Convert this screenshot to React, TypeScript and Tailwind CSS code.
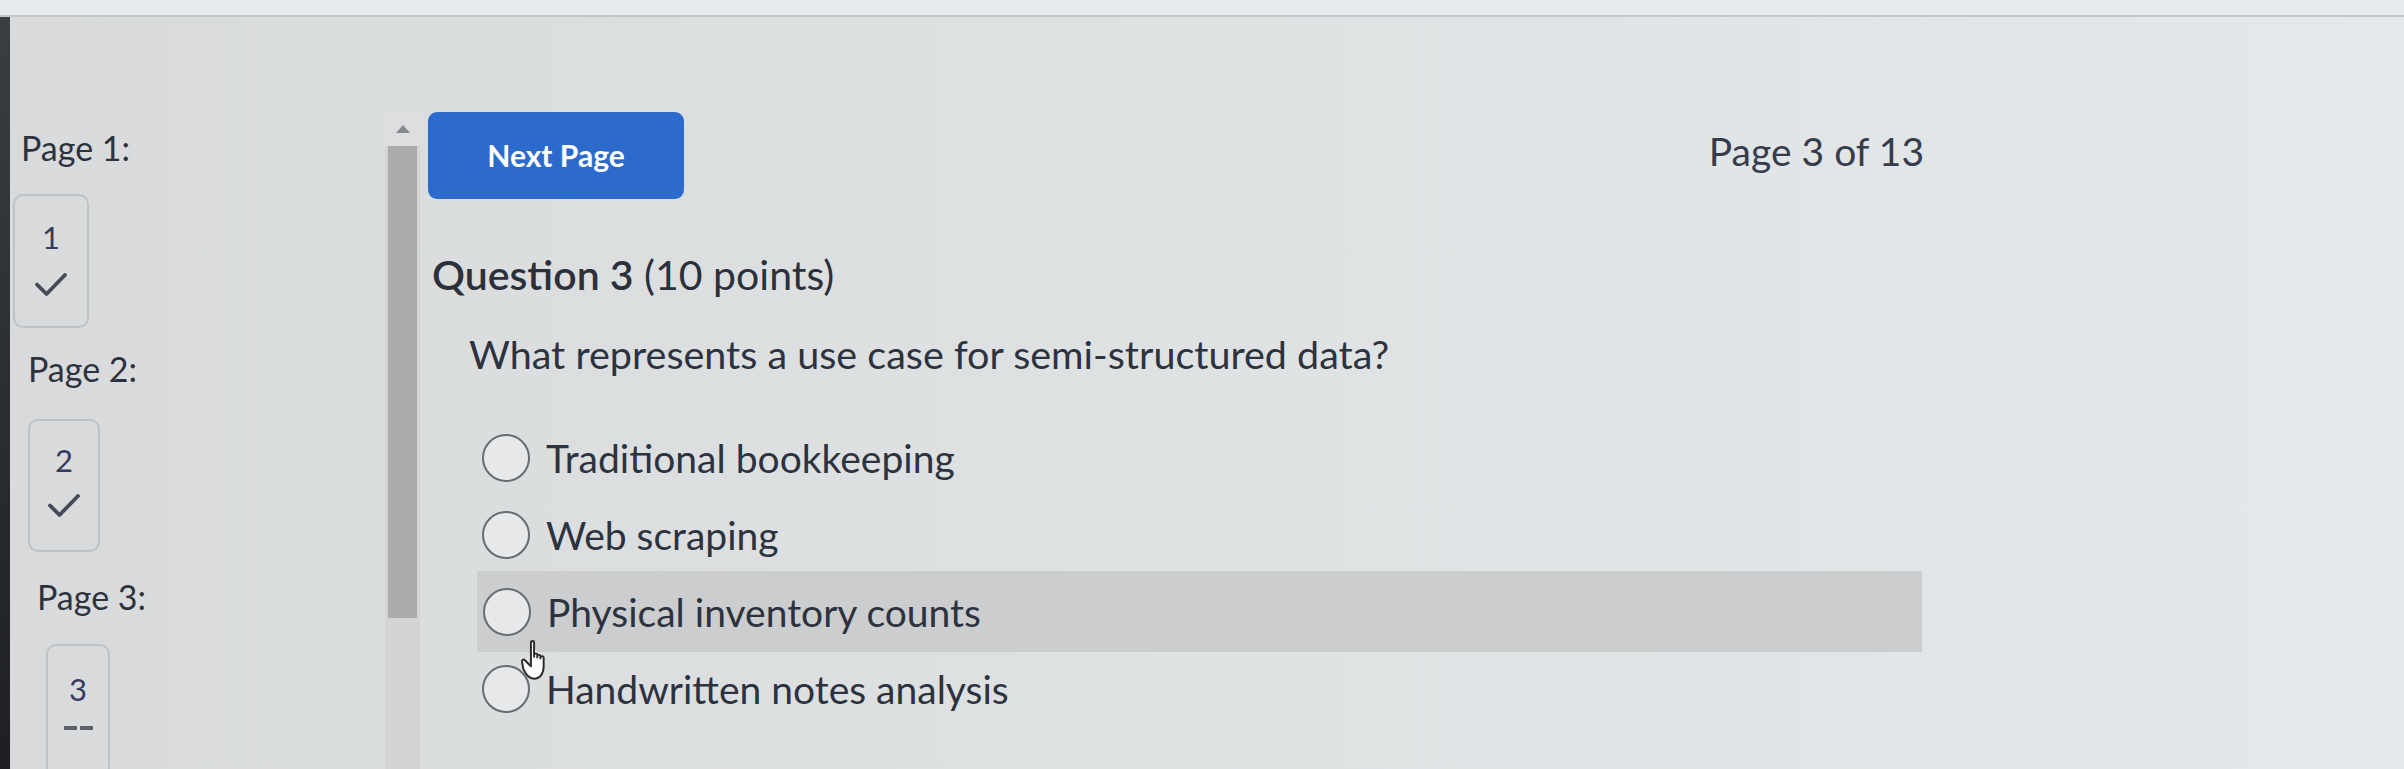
import React from "react";

const font = { fontFamily: "Lato, 'Open Sans', sans-serif" };

function Check() {
  return (
    <svg width="34" height="25" viewBox="0 0 34 25" fill="none">
      <path d="M3 12.5 L12.5 22 L31 3" stroke="#454a56" strokeWidth="3.8" strokeLinecap="round" strokeLinejoin="round" />
    </svg>
  );
}

function Radio() {
  return <div className="h-[48px] w-[48px] shrink-0 rounded-full border-2 border-[#676c74] bg-[#e6e8e9]" />;
}

function Cursor() {
  return (
    <svg width="36" height="46" viewBox="0 0 20 26" className="absolute left-[520px] top-[638px]">
      <path
        d="M6 2.5c0-1 1.8-1 1.8 0V11 M7.8 9.5c0-1 1.8-1 1.8 0v2 M9.6 10.3c0-1 1.8-1 1.8 0v1.7 M11.4 11c0-1 1.8-1 1.8 0v5c0 4-2 7-5.5 7-3 0-4.5-2-6-5.5L1 13.5c-.4-1 .9-1.8 1.7-.8L6 16V2.5"
        fill="#ffffff"
        stroke="#2a2a2a"
        strokeWidth="1.1"
        strokeLinejoin="round"
      />
    </svg>
  );
}

export default function App() {
  const options = [
    "Traditional bookkeeping",
    "Web scraping",
    "Physical inventory counts",
    "Handwritten notes analysis",
  ];
  return (
    <div
      className="relative flex h-[769px] w-[2404px] flex-col overflow-hidden bg-linear-to-r from-[#d8dadb] via-[#dfe2e3] to-[#e5e8ea] text-[#2d323f]"
      style={font}
    >
      <div className="h-[17px] w-full shrink-0 border-b-2 border-[#c4c7c9] bg-[#e7eaec]" />
      <div className="flex flex-1">
        <div className="w-[10px] shrink-0 bg-linear-to-b from-[#3a3d42] to-[#1c1e22]" />
        {/* sidebar */}
        <div className="flex w-[375px] shrink-0 flex-col pt-[112px] text-[34px] leading-[38px] text-[#2d323f]">
          <div className="ml-[11px]">Page 1:</div>
          <div className="ml-[3px] mt-[27px] flex h-[134px] w-[76px] flex-col items-center rounded-[10px] border-2 border-[#bfc2c5] pt-[22px]">
            <span className="text-[31px] leading-[38px] text-[#363b60]">1</span>
            <div className="mt-[16px]"><Check /></div>
          </div>
          <div className="ml-[18px] mt-[22px]">Page 2:</div>
          <div className="ml-[18px] mt-[31px] flex h-[133px] w-[72px] flex-col items-center rounded-[10px] border-2 border-[#bfc2c5] pt-[20px]">
            <span className="text-[31px] leading-[38px] text-[#363b60]">2</span>
            <div className="mt-[14px]"><Check /></div>
          </div>
          <div className="ml-[27px] mt-[26px]">Page 3:</div>
          <div className="ml-[36px] mt-[28px] flex h-[160px] w-[64px] flex-col items-center rounded-t-[10px] border-2 border-b-0 border-[#bfc2c5] pt-[24px]">
            <span className="text-[31px] leading-[38px] text-[#363b60]">3</span>
            <div className="mt-[18px] flex gap-[3px]">
              <div className="h-[4px] w-[13px] bg-[#5a5f6a]" />
              <div className="h-[4px] w-[13px] bg-[#5a5f6a]" />
            </div>
          </div>
        </div>
        {/* scrollbar */}
        <div className="mt-[95px] flex w-[35px] shrink-0 flex-col items-center bg-[#d2d4d5]">
          <div className="flex h-[34px] w-full items-center justify-center bg-[#dcdedf]">
            <div className="h-0 w-0 border-x-[7px] border-b-[8px] border-x-transparent border-b-[#85888c]" />
          </div>
          <div className="h-[472px] w-[29px] bg-[#a9abad]" />
        </div>
        {/* main */}
        <div className="ml-[8px] flex w-[1500px] flex-col pt-[95px]">
          <div className="flex items-start justify-between">
            <button className="flex h-[87px] w-[256px] items-center justify-center rounded-[9px] bg-[#2c6acb] text-[30px] font-bold text-white">
              Next Page
            </button>
            <div className="mr-[4px] mt-[16px] text-[39px] leading-[46px] text-[#373c4c]">Page 3 of 13</div>
          </div>
          <div className="ml-[4px] mt-[52px] text-[41px] leading-[48px] text-[#2b303b]">
            <span className="font-semibold">Question 3</span> (10 points)
          </div>
          <div className="ml-[41px] mt-[31px] text-[39.5px] leading-[48px] text-[#2d323f]">
            What represents a use case for semi-structured data?
          </div>
          <div className="mt-[41px] flex flex-col">
            {options.map((o, i) => (
              <div
                key={o}
                className={
                  i === 2
                    ? "-my-[2px] ml-[49px] mr-[6px] flex h-[81px] items-center gap-[16px] bg-[#cbcdce] pl-[6px]"
                    : "flex h-[77px] items-center gap-[16px] pl-[54px]"
                }
              >
                <Radio />
                <span className="text-[39px] leading-[48px] text-[#2d323f]">{o}</span>
              </div>
            ))}
          </div>
        </div>
      </div>
      <Cursor />
    </div>
  );
}
